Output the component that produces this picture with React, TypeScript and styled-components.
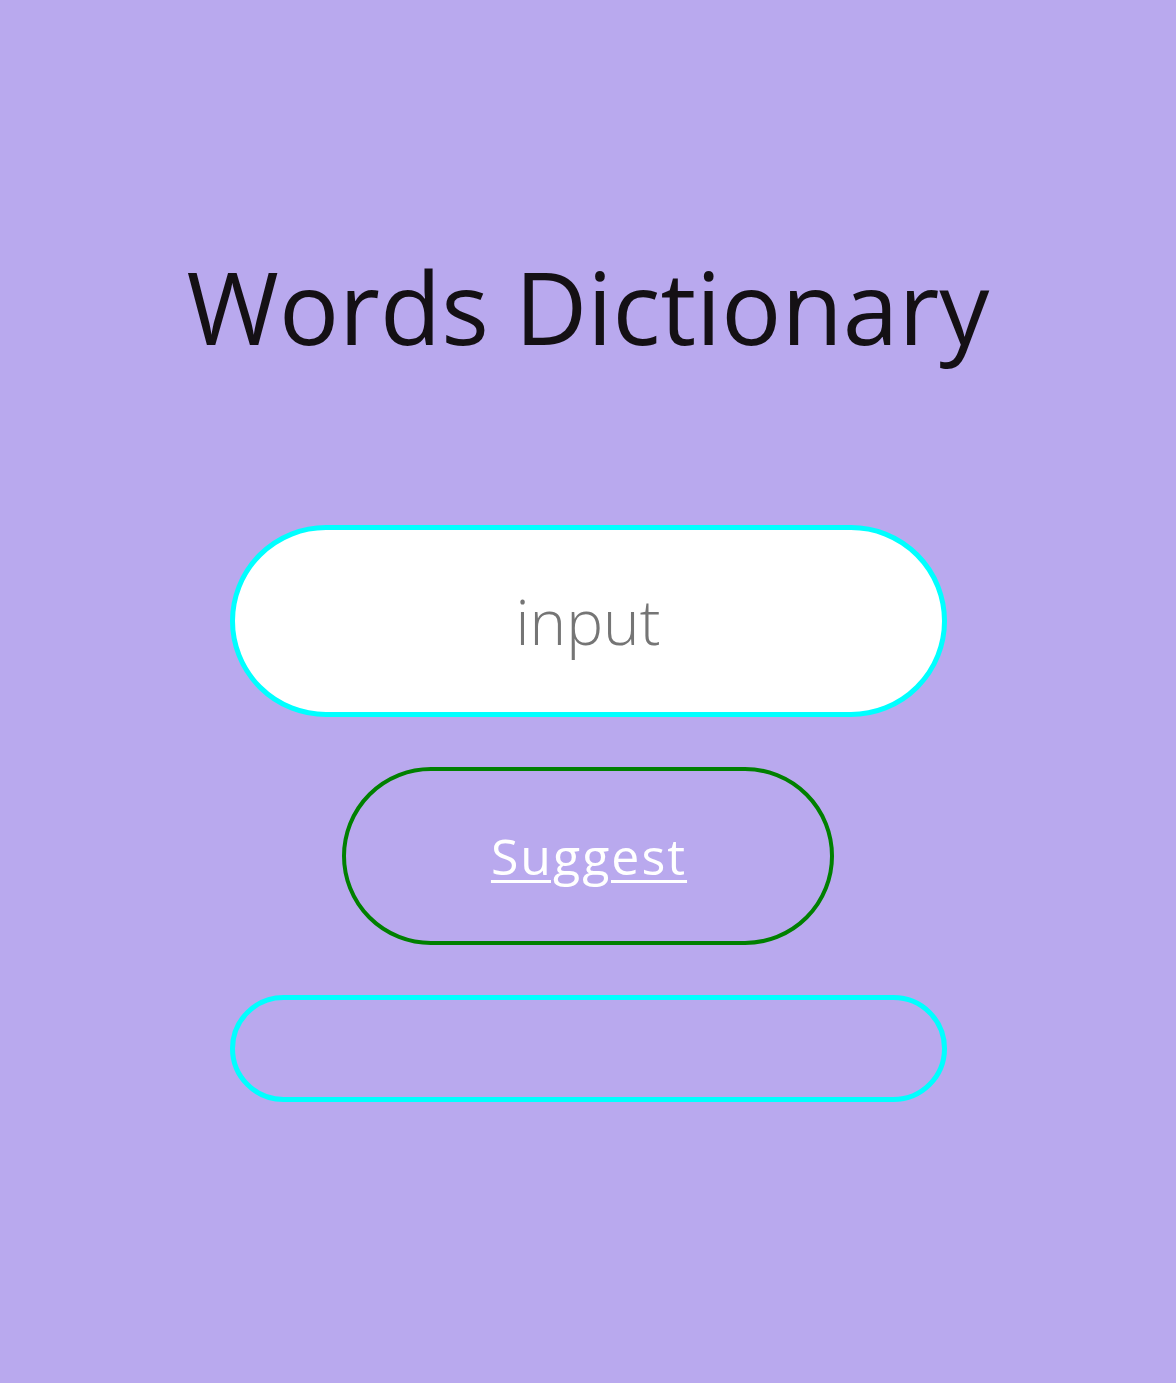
import React from "react";
import styled, { createGlobalStyle } from "styled-components";

const GlobalStyle = createGlobalStyle`
  html, body {
    margin: 0;
    padding: 0;
    background: #b9a9ee;
  }
  body {
    font-family: "Open Sans", "Noto Sans", sans-serif;
  }
  * { box-sizing: border-box; }
`;

const Page = styled.main`
  min-height: 100vh;
  background: #b9a9ee;
  display: flex;
  flex-direction: column;
  align-items: center;
  padding-top: 241px;
`;

const Title = styled.h1`
  margin: 0 0 154px;
  font-family: "Open Sans", "Noto Sans", sans-serif;
  font-weight: 500;
  font-size: 100px;
  line-height: 130px;
  color: #141014;
`;

const Form = styled.div`
  display: flex;
  flex-direction: column;
  align-items: center;
  gap: 50px;
`;

const Field = styled.input`
  width: 717px;
  height: 192px;
  border: 5px solid #00ffff;
  border-radius: 96px;
  background: #ffffff;
  text-align: center;
  font-family: "Open Sans", "Noto Sans", sans-serif;
  font-weight: 300;
  font-size: 62px;
  color: #333;
  outline: none;
  &::placeholder {
    color: #757575;
  }
`;

const SuggestButton = styled.button`
  width: 492px;
  height: 178px;
  border: 4px solid #008000;
  border-radius: 89px;
  background: transparent;
  display: flex;
  align-items: center;
  justify-content: center;
  cursor: pointer;
  padding: 0;
`;

const SuggestLink = styled.a`
  font-family: "Open Sans", "Noto Sans", sans-serif;
  font-weight: 400;
  font-size: 50px;
  letter-spacing: 2px;
  margin-right: -2px;
  color: #ffffff;
  text-decoration: underline;
  text-decoration-thickness: 3px;
  text-underline-offset: 5px;
`;

const Output = styled.div`
  width: 717px;
  height: 107px;
  border: 5px solid #00ffff;
  border-radius: 54px;
`;

export default function App() {
  return (
    <>
      <GlobalStyle />
      <Page>
        <Title>Words Dictionary</Title>
        <Form>
          <Field type="text" placeholder="input" />
          <SuggestButton type="button">
            <SuggestLink href="#">Suggest</SuggestLink>
          </SuggestButton>
          <Output />
        </Form>
      </Page>
    </>
  );
}
